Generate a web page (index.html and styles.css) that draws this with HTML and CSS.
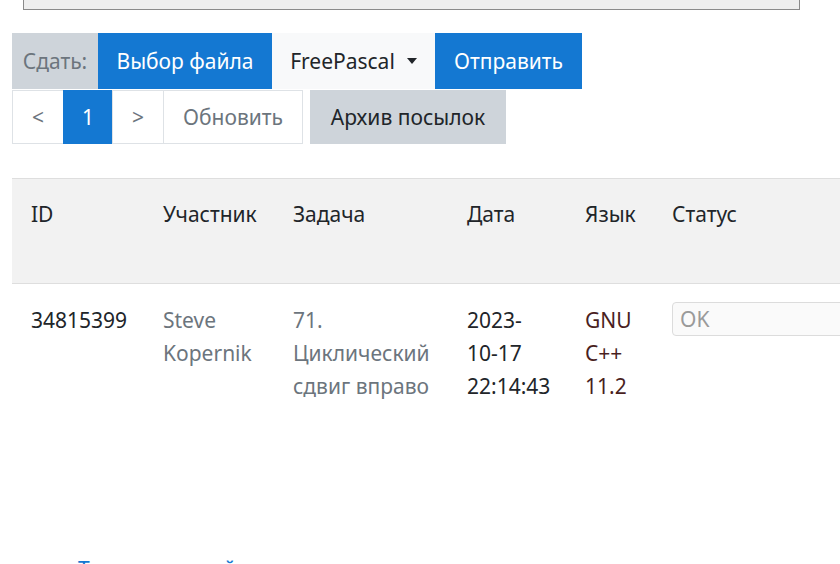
FILE: index.html
```html
<!DOCTYPE html>
<html lang="ru">
<head>
<meta charset="utf-8">
<title>Посылки</title>
<link rel="stylesheet" href="styles.css">
</head>
<body>
<div class="topbox"></div>
<div class="page">
  <div class="submit-row">
    <span class="addon">Сдать:</span>
    <button class="btn btn-blue">Выбор файла</button>
    <button class="btn btn-light">FreePascal <span class="caret"></span></button>
    <button class="btn btn-blue">Отправить</button>
  </div>
  <div class="nav-row">
    <div class="pager">
      <span class="page-item">&lt;</span>
      <span class="page-item active">1</span>
      <span class="page-item">&gt;</span>
      <span class="page-item muted">Обновить</span>
    </div>
    <button class="btn btn-gray">Архив посылок</button>
  </div>
  <table class="runs">
    <colgroup>
      <col class="c-id"><col class="c-user"><col class="c-task"><col class="c-date"><col class="c-lang"><col class="c-status">
    </colgroup>
    <thead>
      <tr><th>ID</th><th>Участник</th><th>Задача</th><th>Дата</th><th>Язык</th><th>Статус</th></tr>
    </thead>
    <tbody>
      <tr>
        <td>34815399</td>
        <td class="gray">Steve Kopernik</td>
        <td class="gray">71. Циклический сдвиг вправо</td>
        <td>2023-<br>10-17<br>22:14:43</td>
        <td class="lang">GNU<br>C++<br>11.2</td>
        <td><input class="status" type="text" placeholder="OK"></td>
      </tr>
    </tbody>
  </table>
  <a class="bottom-link" href="#">Тут вы текущий</a>
</div>
</body>
</html>
```
FILE: styles.css
```css
html, body {
  margin: 0;
  padding: 0;
  overflow: hidden;
  background: #fff;
}
body {
  font-family: "Noto Sans", "Open Sans", sans-serif;
  font-size: 21px;
  line-height: 33px;
  color: #212529;
  width: 840px;
  height: 564px;
}
.topbox {
  margin-left: 23px;
  width: 777px;
  height: 10px;
  box-sizing: border-box;
  background: #eeeeee;
  border: 1px solid #8a8a8a;
  border-top: none;
}
.page {
  padding-left: 12px;
}
.submit-row {
  display: flex;
  margin-top: 23px;
  height: 56px;
}
.addon, .btn {
  display: flex;
  align-items: center;
  height: 56px;
  box-sizing: border-box;
  border: none;
  font: inherit;
  margin: 0;
}
.addon {
  width: 86px;
  justify-content: center;
  background: #ced4da;
  color: #6c757d;
}
.btn {
  justify-content: center;
  padding: 0;
}
.btn-blue {
  background: #1478d2;
  color: #fff;
}
.submit-row .btn-blue:nth-of-type(1) { width: 174px; }
.submit-row .btn-blue:last-child { width: 147px; }
.btn-light {
  width: 163px;
  background: #f8f9fa;
  color: #212529;
  gap: 12px;
}
.caret {
  width: 0;
  height: 0;
  border-left: 5.5px solid transparent;
  border-right: 5.5px solid transparent;
  border-top: 6px solid #212529;
}
.nav-row {
  display: flex;
  gap: 7px;
  margin-top: 1px;
  height: 54px;
}
.pager {
  display: flex;
}
.page-item {
  display: flex;
  align-items: center;
  justify-content: center;
  height: 54px;
  box-sizing: border-box;
  border: 1px solid #dee2e6;
  margin-left: -1px;
  color: #6c757d;
  width: 52px;
}
.page-item:first-child { margin-left: 0; }
.page-item.active {
  background: #1478d2;
  border-color: #1478d2;
  color: #fff;
  width: 50px;
}
.page-item:nth-child(3) { width: 52px; }
.page-item.muted { width: 140px; }
.btn-gray {
  width: 196px;
  height: 54px;
  background: #ced4da;
  color: #212529;
}
.runs {
  margin-top: 34px;
  border-collapse: collapse;
  table-layout: fixed;
  width: 1000px;
}
.c-id { width: 132px; }
.c-user { width: 130px; }
.c-task { width: 174px; }
.c-date { width: 118px; }
.c-lang { width: 87px; }
.c-status { width: 359px; }
.runs th {
  background: #f2f2f2;
  font-weight: normal;
  text-align: left;
  vertical-align: top;
  height: 105px;
  box-sizing: border-box;
  padding: 19px 19px 0;
  border-top: 1px solid #dedede;
  border-bottom: 1px solid #dedede;
}
.runs td {
  vertical-align: top;
  padding: 20px 19px;
}
.runs td.gray { color: #6c757d; }
.runs td.lang { color: #4a1f1f; }
.status {
  display: block;
  width: 100%;
  box-sizing: border-box;
  height: 34px;
  margin-top: -2px;
  border: 1px solid #dcdcdc;
  border-radius: 4px;
  background: #fafafa;
  font: inherit;
  padding: 0 7px;
}
.status::placeholder { color: #9a9a9a; }
.bottom-link {
  display: block;
  margin-top: 130px;
  margin-left: 66px;
  color: #1478d2;
  text-decoration: none;
}
```
